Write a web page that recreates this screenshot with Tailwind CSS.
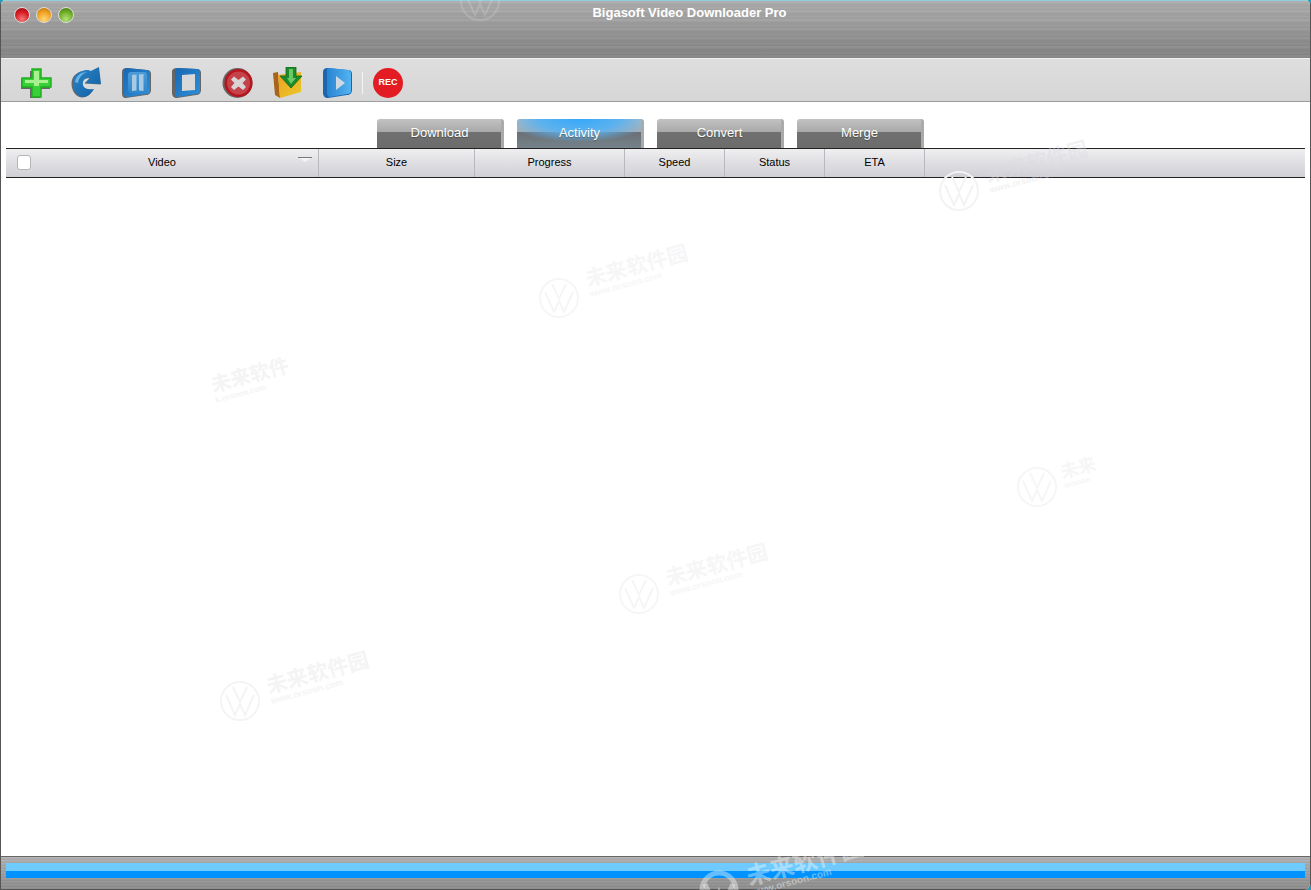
<!DOCTYPE html>
<html lang="en">
<head>
    <meta charset="UTF-8">
    <meta name="viewport" content="width=device-width, initial-scale=1.0">
    <title>Bigasoft Video Downloader Pro</title>
    <script src="https://cdn.jsdelivr.net/npm/@tailwindcss/browser@4"></script>
</head>
<body class="bg-[#1f9fc0] font-['Liberation_Sans',Arial,sans-serif]">
    <div class="relative flex h-[890px] w-[1311px] flex-col overflow-hidden rounded-t-[5px] rounded-br-[6px] border-x border-[#555] bg-white">

        <!-- Title bar -->
        <div class="relative flex h-[58px] shrink-0 items-start border-t border-[#8fd0e0] bg-[repeating-linear-gradient(180deg,#ffffff0a_0px,#ffffff0a_2px,#00000008_3px,#00000008_5px,#ffffff05_7px,#0000000d_9px),linear-gradient(180deg,#acacac_0%,#a0a0a0_35%,#8e8e8e_70%,#868686_100%)]">
            <div class="ml-[13px] mt-[6px] flex gap-[6px]">
                <span class="h-4 w-4 rounded-full border border-[#ddd] bg-[radial-gradient(circle_at_50%_80%,#f47a7a_0%,#d81c22_55%,#8e0d12_100%)]"></span>
                <span class="h-4 w-4 rounded-full border border-[#ddd] bg-[radial-gradient(circle_at_50%_80%,#ffd978_0%,#f0a020_55%,#b56c08_100%)]"></span>
                <span class="h-4 w-4 rounded-full border border-[#ddd] bg-[radial-gradient(circle_at_50%_80%,#b6e27a_0%,#6fae26_55%,#3c7410_100%)]"></span>
            </div>
            <div class="absolute inset-x-0 top-[5px] pl-[68px] text-center text-[13px] font-bold leading-[14px] text-white">Bigasoft Video Downloader Pro</div>
        </div>

        <!-- Toolbar -->
        <div class="flex h-[44px] shrink-0 items-center border-y border-t-[#f2f2f2] border-b-[#9c9c9c] bg-[linear-gradient(180deg,#dedede,#d6d6d6)] pl-[20px] pt-[6px]">
            <svg width="0" height="0" class="absolute">
                <defs>
                    <linearGradient id="blue" x1="0" y1="0" x2="1" y2="1"><stop offset="0" stop-color="#1768b4"/><stop offset="1" stop-color="#2f8fd6"/></linearGradient>
                    <linearGradient id="blueInner" x1="0" y1="0" x2="0" y2="1"><stop offset="0" stop-color="#4c9cd8"/><stop offset="1" stop-color="#2f86cc"/></linearGradient>
                    <linearGradient id="arrow" x1="0" y1="0" x2="1" y2="1"><stop offset="0" stop-color="#2a86cc"/><stop offset="1" stop-color="#125f9f"/></linearGradient>
                    <linearGradient id="folder" x1="0" y1="0" x2="1" y2="1"><stop offset="0" stop-color="#f0a122"/><stop offset="1" stop-color="#e8c92a"/></linearGradient>
                    <linearGradient id="play" x1="0" y1="0" x2="1" y2="0"><stop offset="0" stop-color="#2a84d2"/><stop offset="1" stop-color="#52b4f2"/></linearGradient>
                </defs>
            </svg>
            <div class="flex items-center gap-[18px]">
                <!-- add -->
                <svg width="32" height="32" viewBox="0 0 32 32" class="shrink-0 -translate-x-[1px]">
                    <path d="M11 3h10v8h10v10H21v9H11v-9H2V11h9z" fill="#666" transform="translate(-1 1)"/>
                    <path d="M12 2h9v9h10v9H21v10h-9V20H2v-9h10z" fill="#39cf39" stroke="#1eb01e" stroke-width="1.5"/>
                    <path d="M14 4h5v9h9v3h-9v3l-5 0v-3H5v-3h9z" fill="#a9f090"/>
                </svg>
                <!-- refresh -->
                <svg width="32" height="32" viewBox="0 0 32 32" class="shrink-0">
                    <path d="M1 16C1 8 8 3 17 3L20 4 28 0 30 17 14 16 19 11C14 10 11 14 12 18 13 22 18 23 23 22 20 27 16 30 12 30 6 30 1 24 1 16z" fill="#666" transform="translate(-.5 .5)"/>
                    <path d="M2 16C2 8 9 3 17 3L20 4 28 0 30 17 14 16 19 11C14 10 11 14 12 18 13 22 18 23 23 22 20 27 16 30 12 30 7 30 2 24 2 16z" fill="url(#arrow)"/>
                    <path d="M4 15C5 9 10 5 16 5 11 7 8 10 7 16z" fill="#6db4e4"/>
                </svg>
                <!-- pause -->
                <svg width="32" height="32" viewBox="0 0 32 32" class="shrink-0">
                    <path d="M5 1l21 2c3 0 4 2 4 4v16c0 3-2 5-5 5L5 31c-3 0-4-2-4-5V5c0-3 2-4 4-4z" fill="#666"/>
                    <path d="M6 1l20 2c2 0 3 2 3 4v16c0 3-1 4-4 4L7 30c-3 0-4-2-4-4V5c0-3 1-4 3-4z" fill="url(#blue)"/>
                    <rect x="7" y="5" width="19" height="21" rx="3" fill="url(#blueInner)"/>
                    <path d="M11 8l4.500-.5v16l-4.500.5zM18 7.500l4.500-.5v17l-4.500-.5z" fill="#a9c8e2"/>
                </svg>
                <!-- stop -->
                <svg width="32" height="32" viewBox="0 0 32 32" class="shrink-0">
                    <path d="M6 1l20 1c3 0 4 2 4 4v17c0 3-2 5-5 5L6 31c-3 0-5-2-5-5V5c0-3 2-4 5-4z" fill="#666"/>
                    <path d="M7 1l19 1c2 0 3 2 3 4v17c0 3-1 4-4 4L8 30c-3 0-4-2-4-4V5c0-3 1-4 3-4z" fill="url(#blue)"/>
                    <path d="M11 8l13-1v16l-13 1z" fill="#d8d8d8"/>
                </svg>
                <!-- cancel -->
                <svg width="32" height="32" viewBox="0 0 32 32" class="shrink-0 translate-x-[1px]">
                    <circle cx="15.500" cy="16" r="15" fill="#666"/>
                    <circle cx="16.500" cy="16" r="14" fill="#b8141c"/>
                    <circle cx="16.500" cy="16" r="11.500" fill="#c4424a"/>
                    <path d="M12 9.500l4.500 3.500 4.500-3.500 3 3-3.500 3.500 3.500 4-3 3-4.500-3.500-4.500 3.500-3-3 3.500-4-3.500-3.500z" fill="#d9d4d4"/>
                </svg>
                <!-- open folder -->
                <svg width="32" height="32" viewBox="0 0 32 32" class="shrink-0 translate-x-[1px]">
                    <path d="M1 6l5-1 2 26-5-3z" fill="#a8651a"/>
                    <path d="M6 8l23-3v20L8 31z" fill="url(#folder)"/>
                    <path d="M14 0h10v9h6L19 21 8 9h6z" fill="#1c8a2a" stroke="#0f6a1b" stroke-width=".8"/>
                    <path d="M17 2h4v9h3l-5 6-4-6h2z" fill="#69c964"/>
                </svg>
                <!-- play -->
                <svg width="32" height="32" viewBox="0 0 32 32" class="shrink-0 translate-x-[1px]">
                    <path d="M5 1l21 2c3 0 4 2 4 4v16c0 3-2 5-5 5L6 31c-3 0-5-2-5-5V5c0-3 2-4 4-4z" fill="#1b66ad"/>
                    <path d="M7 1l19 2c2 0 3 2 3 4v16c0 3-1 4-4 4L8 30c-2 0-3-2-3-4V5c0-3 0-4 2-4z" fill="url(#play)"/>
                    <path d="M14 9l9 7-9 7z" fill="#cfd8e0"/>
                </svg>
            </div>
            <span class="ml-[9px] h-[22px] w-px bg-[#f4f4f4]"></span>
            <div class="ml-[10px] flex h-[30px] w-[30px] items-center justify-center rounded-full bg-[#e31b23] text-[9px] font-bold text-white">REC</div>
        </div>

        <!-- Tabs -->
        <div class="flex h-[46px] shrink-0 items-end gap-[13px] pl-[376px]">
            <div class="h-[29px] w-[127px] rounded-t-[3px] border-r-[3px] border-[#aaa] bg-[linear-gradient(180deg,#c2c2c2_0%,#a9a9a9_44%,#707070_45%,#6c6c6c_100%)] pl-[1px] text-center text-[13px] leading-[28px] text-white [text-shadow:0_1px_1px_#0000004d]">Download</div>
            <div class="h-[29px] w-[127px] rounded-t-[3px] border-r-[3px] border-[#aaa] bg-[radial-gradient(ellipse_60%_80%_at_50%_0%,#36a8fa_0%,#5db2ee_55%,transparent_100%),linear-gradient(180deg,#b5bcc2_0%,#a4adb4_44%,#6a6f73_45%,#76838c_100%)] pl-[1px] text-center text-[13px] leading-[28px] text-white [text-shadow:0_1px_1px_#0000004d]">Activity</div>
            <div class="h-[29px] w-[127px] rounded-t-[3px] border-r-[3px] border-[#aaa] bg-[linear-gradient(180deg,#c2c2c2_0%,#a9a9a9_44%,#707070_45%,#6c6c6c_100%)] pl-[1px] text-center text-[13px] leading-[28px] text-white [text-shadow:0_1px_1px_#0000004d]">Convert</div>
            <div class="h-[29px] w-[127px] rounded-t-[3px] border-r-[3px] border-[#aaa] bg-[linear-gradient(180deg,#c2c2c2_0%,#a9a9a9_44%,#707070_45%,#6c6c6c_100%)] pl-[1px] text-center text-[13px] leading-[28px] text-white [text-shadow:0_1px_1px_#0000004d]">Merge</div>
        </div>

        <!-- Table header -->
        <div class="mx-[5px] flex h-[30px] shrink-0 border-y border-[#222] bg-[linear-gradient(180deg,#efeff1,#cfcfd5)] pb-[2px] text-[11px] text-black">
            <div class="relative -mb-[2px] flex w-[313px] items-center justify-center border-r border-[#b9b9bd] pb-[2px]">
                <span class="absolute left-[11px] top-[6px] h-[15px] w-[14px] rounded-[3px] border border-[#b5b5b5] bg-white"></span>
                <span>Video</span>
                <svg width="14" height="5" viewBox="0 0 14 5" class="absolute right-[6px] top-[8px]"><path d="M0 0h14L7 5z" fill="#f4f4f4"/><path d="M0 .5h14" stroke="#777"/></svg>
            </div>
            <div class="-mb-[2px] flex w-[156px] items-center justify-center border-r border-[#b9b9bd] pb-[2px]">Size</div>
            <div class="-mb-[2px] flex w-[150px] items-center justify-center border-r border-[#b9b9bd] pb-[2px]">Progress</div>
            <div class="-mb-[2px] flex w-[100px] items-center justify-center border-r border-[#b9b9bd] pb-[2px]">Speed</div>
            <div class="-mb-[2px] flex w-[100px] items-center justify-center border-r border-[#b9b9bd] pb-[2px]">Status</div>
            <div class="-mb-[2px] flex w-[100px] items-center justify-center border-r border-[#b9b9bd] pb-[2px]">ETA</div>
        </div>

        <!-- List area -->
        <div class="flex-1 bg-white"></div>

        <!-- Status bar -->
        <div class="flex h-[34px] shrink-0 items-start border-y border-t-[#666] border-b-[#555] bg-[repeating-linear-gradient(180deg,#ffffff0d_0px,#ffffff0d_1px,#00000008_2px,#00000008_3px),linear-gradient(180deg,#b0b0b0,#8c8c8c)] px-[5px] pt-[6px]">
            <div class="h-[15px] w-full bg-[linear-gradient(180deg,#6fcbff_0%,#6fcbff_50%,#0093ff_51%,#0093ff_100%)]"></div>
        </div>

        <!-- Watermarks -->
        <div class="pointer-events-none absolute left-[584px] top-[252px] -rotate-[15deg] text-[#f6f6f7]">
            <div class="font-['Noto_Sans_CJK_SC',sans-serif] text-[21px] font-bold leading-[24px]">未来软件园</div>
            <div class="text-[9px] font-bold leading-[10px]">www.orsoon.com</div>
        </div>
        <svg width="40" height="40" viewBox="0 0 40 40" fill="none" stroke="#f6f6f7" stroke-width="2" class="pointer-events-none absolute left-[538px] top-[278px]"><circle cx="20" cy="20" r="19"/><path d="M6 14l9 20 5-11 5 11 9-20M13 6l7 15 7-15"/></svg>

        <div class="pointer-events-none absolute left-[984px] top-[148px] -rotate-[15deg] text-[#dcdce0]/40">
            <div class="font-['Noto_Sans_CJK_SC',sans-serif] text-[21px] font-bold leading-[24px]">未来软件园</div>
            <div class="text-[9px] font-bold leading-[10px]">www.orsoon.com</div>
        </div>
        <svg width="40" height="40" viewBox="0 0 40 40" fill="none" stroke="#f3f3f4" stroke-width="2" class="pointer-events-none absolute left-[938px] top-[171px]"><circle cx="20" cy="20" r="19"/><path d="M6 14l9 20 5-11 5 11 9-20M13 6l7 15 7-15"/></svg>

        <div class="pointer-events-none absolute left-[664px] top-[551px] -rotate-[15deg] text-[#f6f6f7]">
            <div class="font-['Noto_Sans_CJK_SC',sans-serif] text-[21px] font-bold leading-[24px]">未来软件园</div>
            <div class="text-[9px] font-bold leading-[10px]">www.orsoon.com</div>
        </div>
        <svg width="40" height="40" viewBox="0 0 40 40" fill="none" stroke="#f6f6f7" stroke-width="2" class="pointer-events-none absolute left-[618px] top-[574px]"><circle cx="20" cy="20" r="19"/><path d="M6 14l9 20 5-11 5 11 9-20M13 6l7 15 7-15"/></svg>

        <div class="pointer-events-none absolute left-[265px] top-[659px] -rotate-[15deg] text-[#f4f4f5]">
            <div class="font-['Noto_Sans_CJK_SC',sans-serif] text-[21px] font-bold leading-[24px]">未来软件园</div>
            <div class="text-[9px] font-bold leading-[10px]">www.orsoon.com</div>
        </div>
        <svg width="40" height="40" viewBox="0 0 40 40" fill="none" stroke="#f4f4f5" stroke-width="2" class="pointer-events-none absolute left-[219px] top-[681px]"><circle cx="20" cy="20" r="19"/><path d="M6 14l9 20 5-11 5 11 9-20M13 6l7 15 7-15"/></svg>

        <div class="pointer-events-none absolute left-[210px] top-[362px] -rotate-[15deg] text-[#f4f4f5]">
            <div class="font-['Noto_Sans_CJK_SC',sans-serif] text-[20px] font-bold leading-[24px]">未来软件</div>
            <div class="text-[8px] font-bold leading-[10px]">k.orsoon.com</div>
        </div>

        <div class="pointer-events-none absolute left-[1060px] top-[455px] -rotate-[15deg] text-[#f6f6f7]">
            <div class="font-['Noto_Sans_CJK_SC',sans-serif] text-[18px] font-bold leading-[22px]">未来</div>
            <div class="text-[8px] font-bold leading-[10px]">orsoon</div>
        </div>
        <svg width="40" height="40" viewBox="0 0 40 40" fill="none" stroke="#f6f6f7" stroke-width="2" class="pointer-events-none absolute left-[1016px] top-[467px]"><circle cx="20" cy="20" r="19"/><path d="M6 14l9 20 5-11 5 11 9-20M13 6l7 15 7-15"/></svg>

        <div class="pointer-events-none absolute left-[745px] top-[848px] -rotate-[15deg] text-white/40">
            <div class="font-['Noto_Sans_CJK_SC',sans-serif] text-[24px] font-bold leading-[24px]">未来软件园</div>
            <div class="text-[10px] font-bold leading-[11px]">www.orsoon.com</div>
        </div>
        <svg width="40" height="40" viewBox="0 0 40 40" fill="none" stroke="#ffffff66" stroke-width="5" class="pointer-events-none absolute left-[698px] top-[870px]"><circle cx="20" cy="20" r="17"/><path d="M6 14l9 20 5-11 5 11 9-20"/></svg>

        <svg width="40" height="40" viewBox="0 0 40 40" fill="none" stroke="#ffffff26" stroke-width="2" class="pointer-events-none absolute left-[459px] top-[-19px]"><circle cx="20" cy="20" r="19"/><path d="M6 14l9 20 5-11 5 11 9-20M13 6l7 15 7-15"/></svg>
    </div>
</body>
</html>
